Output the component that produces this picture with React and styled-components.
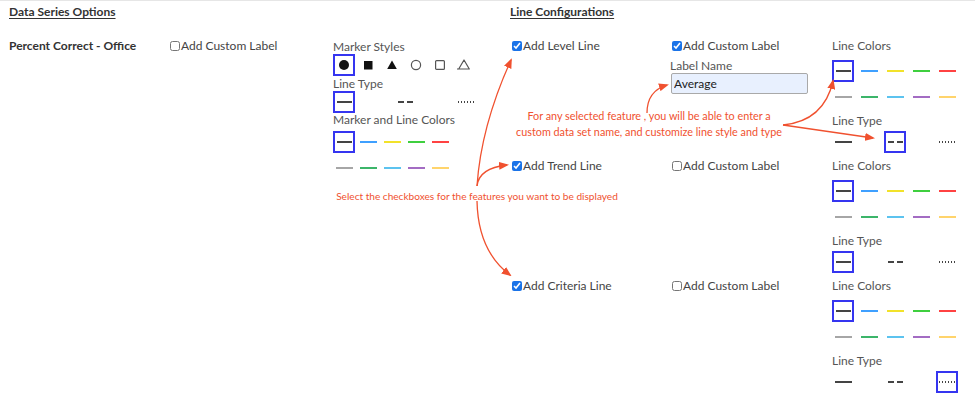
import React from 'react';
import styled, { createGlobalStyle } from 'styled-components';

const GlobalStyle = createGlobalStyle`
  html, body { margin: 0; padding: 0; background: #fff; }
  body { font-family: Lato, "Open Sans", sans-serif; font-size: 12px; color: #444; }
`;

const ACCENT = '#f0512f';
const SELECT = '#3535f0';

const Page = styled.div`
  position: relative;
  width: 975px;
  height: 399px;
  box-sizing: border-box;
  border-top: 1px solid #e6e6e6;
  padding: 3px 0 0 9px;
  display: grid;
  grid-template-columns: 159px 165px 177px 1fr;
  grid-template-rows: 16px auto;
  row-gap: 18px;
  align-items: start;
  overflow: hidden;
`;

const SectionTitle = styled.h2`
  grid-column: ${(p) => p.$col};
  margin: 0;
  font-size: 12px;
  font-weight: 700;
  line-height: 16px;
  color: #333;
  text-decoration: underline;
  text-underline-offset: 2px;
`;

const SeriesName = styled.div`
  font-weight: 700;
  line-height: 16px;
  color: #333;
`;

const CheckLabel = styled.label`
  display: flex;
  align-items: center;
  height: 16px;
  line-height: 16px;
  color: #444;
  white-space: nowrap;

  input {
    width: 10px;
    height: 10px;
    margin: 0 1px 0 2px;
    accent-color: #1a73e8;
  }
`;

const Panel = styled.div`
  display: flex;
  flex-direction: column;
  align-items: flex-start;
`;

const Caption = styled.div`
  line-height: ${(p) => p.$lh}px;
  margin-top: ${(p) => p.$mt || 0}px;
  color: #555;
  white-space: nowrap;
`;

const OptionRow = styled.div`
  display: flex;
  align-items: center;
  height: 22px;
  gap: ${(p) => p.$gap}px;
  margin-top: ${(p) => p.$mt || 0}px;
`;

const Cell = styled.div`
  box-sizing: border-box;
  flex: none;
  width: 22px;
  height: 22px;
  border: 2px solid ${(p) => (p.$selected ? SELECT : 'transparent')};
  display: flex;
  align-items: center;
  justify-content: center;
`;

const patternBg = (p) => {
  if (p.$pattern === 'dashed')
    return `repeating-linear-gradient(90deg, ${p.$color} 0 6px, transparent 6px 9px)`;
  if (p.$pattern === 'dotted')
    return `repeating-linear-gradient(90deg, ${p.$color} 0 1.5px, transparent 1.5px 3px)`;
  return p.$color;
};

const Stroke = styled.div`
  width: ${(p) => p.$w}px;
  height: 2px;
  background: ${patternBg};
`;

const Configs = styled.div`
  display: flex;
  flex-direction: column;
`;

const ConfigBlock = styled.div`
  display: grid;
  grid-template-columns: 160px 162px 1fr;
  height: 120px;
  align-items: start;
`;

const LabelCol = styled.div`
  display: flex;
  flex-direction: column;
  align-items: flex-start;
`;

const NameInput = styled.input`
  box-sizing: border-box;
  width: 137px;
  height: 21px;
  margin: 0 0 0 1px;
  padding: 0 2px;
  border: 1px solid #a9a9a9;
  border-radius: 2px;
  background: #e8f0fe;
  font-family: inherit;
  font-size: 12px;
  color: #222;
  outline: none;
`;

const Overlay = styled.svg`
  position: absolute;
  left: 0;
  top: 0;
  width: 975px;
  height: 399px;
  pointer-events: none;
`;

const Callout = styled.div`
  position: absolute;
  left: ${(p) => p.$x}px;
  top: ${(p) => p.$y}px;
  width: ${(p) => p.$w}px;
  text-align: center;
  font-size: ${(p) => p.$size}px;
  line-height: 16px;
  color: ${ACCENT};
  white-space: nowrap;
`;

const TOP_COLORS = ['#444444', '#3fa0ff', '#f2e22a', '#3fcf3f', '#ff4242'];
const BOTTOM_COLORS = ['#a6a6a6', '#3cb56a', '#5cc3ef', '#a36cc3', '#ffd46c'];

const Marker = ({ kind }) => {
  const c = '#111';
  const o = '#555';
  return (
    <svg width="14" height="14" viewBox="0 0 14 14">
      {kind === 'circle' && <circle cx="7" cy="7" r="5" fill={c} />}
      {kind === 'square' && <rect x="3" y="3" width="8.5" height="8.5" fill={c} />}
      {kind === 'triangle' && <path d="M7 2.5 L11.8 11 L2.2 11 Z" fill={c} />}
      {kind === 'ocircle' && <circle cx="7" cy="7" r="4.6" fill="none" stroke={o} strokeWidth="1.2" />}
      {kind === 'osquare' && <rect x="2.6" y="2.6" width="8.8" height="8.8" rx="1" fill="none" stroke={o} strokeWidth="1.2" />}
      {kind === 'otriangle' && (
        <>
          <circle cx="0.8" cy="11" r="0.7" fill={o} />
          <path d="M7 2 L12.3 11 L1.7 11 Z" fill="none" stroke={o} strokeWidth="1.2" strokeLinejoin="round" />
        </>
      )}
    </svg>
  );
};

const ColorRow = ({ colors, selected, gap, mt }) => (
  <OptionRow $gap={gap} $mt={mt}>
    {colors.map((c, i) => (
      <Cell key={c} $selected={selected === i}>
        <Stroke $w={selected === i ? 15 : 17} $color={c} />
      </Cell>
    ))}
  </OptionRow>
);

const TYPES = ['solid', 'dashed', 'dotted'];
const TypeRow = ({ selected, gap, mt }) => (
  <OptionRow $gap={gap} $mt={mt}>
    {TYPES.map((t) => (
      <Cell key={t} $selected={selected === t}>
        <Stroke $w={t === 'solid' ? (selected === t ? 15 : 17) : t === 'dashed' ? 15 : 17} $pattern={t} $color="#444" />
      </Cell>
    ))}
  </OptionRow>
);

const LineStyle = ({ type }) => (
  <Panel>
    <Caption $lh={16}>Line Colors</Caption>
    <ColorRow colors={TOP_COLORS} selected={0} gap={4} mt={6} />
    <ColorRow colors={BOTTOM_COLORS} selected={-1} gap={4} mt={4} />
    <Caption $lh={16} $mt={5}>Line Type</Caption>
    <TypeRow selected={type} gap={30} mt={2} />
  </Panel>
);

const CONFIGS = [
  { name: 'Add Level Line', custom: true, type: 'dashed' },
  { name: 'Add Trend Line', custom: false, type: 'solid' },
  { name: 'Add Criteria Line', custom: false, type: 'dotted' },
];

export default function App() {
  return (
    <>
      <GlobalStyle />
      <Page>
        <SectionTitle $col="1 / 4">Data Series Options</SectionTitle>
        <SectionTitle $col="4">Line Configurations</SectionTitle>

        <SeriesName>Percent Correct - Office</SeriesName>
        <CheckLabel>
          <input type="checkbox" />
          Add Custom Label
        </CheckLabel>
        <Panel>
          <Caption $lh={14} $mt={2}>Marker Styles</Caption>
          <OptionRow $gap={2}>
            {['circle', 'square', 'triangle', 'ocircle', 'osquare', 'otriangle'].map((k, i) => (
              <Cell key={k} $selected={i === 0}>
                <Marker kind={k} />
              </Cell>
            ))}
          </OptionRow>
          <Caption $lh={14} $mt={1}>Line Type</Caption>
          <TypeRow selected="solid" gap={39} />
          <Caption $lh={14}>Marker and Line Colors</Caption>
          <ColorRow colors={TOP_COLORS} selected={0} gap={2} mt={4} />
          <ColorRow colors={BOTTOM_COLORS} selected={-1} gap={2} mt={4} />
        </Panel>

        <Configs>
          {CONFIGS.map((cfg) => (
            <ConfigBlock key={cfg.name}>
              <CheckLabel>
                <input type="checkbox" defaultChecked />
                {cfg.name}
              </CheckLabel>
              <LabelCol>
                <CheckLabel>
                  <input type="checkbox" defaultChecked={cfg.custom} />
                  Add Custom Label
                </CheckLabel>
                {cfg.custom && (
                  <>
                    <Caption $lh={15} $mt={4}>Label Name</Caption>
                    <NameInput type="text" defaultValue="Average" />
                  </>
                )}
              </LabelCol>
              <LineStyle type={cfg.type} />
            </ConfigBlock>
          ))}
        </Configs>

        <Overlay viewBox="0 0 975 399">
          <defs>
            <marker id="arrowhead" markerWidth="10" markerHeight="8" refX="8" refY="4" orient="auto" markerUnits="userSpaceOnUse">
              <path d="M0 0 L10 4 L0 8 Z" fill={ACCENT} />
            </marker>
          </defs>
          <g fill="none" stroke={ACCENT} strokeWidth="1.3" markerEnd="url(#arrowhead)">
            <path d="M477 185 Q 481 125 511 59" />
            <path d="M477 185 Q 479 167 507 164" />
            <path d="M477 200 Q 478 250 510 274" />
            <path d="M647 112 Q 647 90 667 84" />
            <path d="M783 124 Q 824 120 833 80" />
            <path d="M783 124 Q 810 128 873 137" />
          </g>
        </Overlay>
        <Callout $x={327} $y={187} $w={300} $size={10.1}>
          Select the checkboxes for the features you want to be displayed
        </Callout>
        <Callout $x={499} $y={107} $w={300} $size={10.8}>
          For any selected feature , you will be able to enter a
          <br />
          custom data set name, and customize line style and type
        </Callout>
      </Page>
    </>
  );
}
